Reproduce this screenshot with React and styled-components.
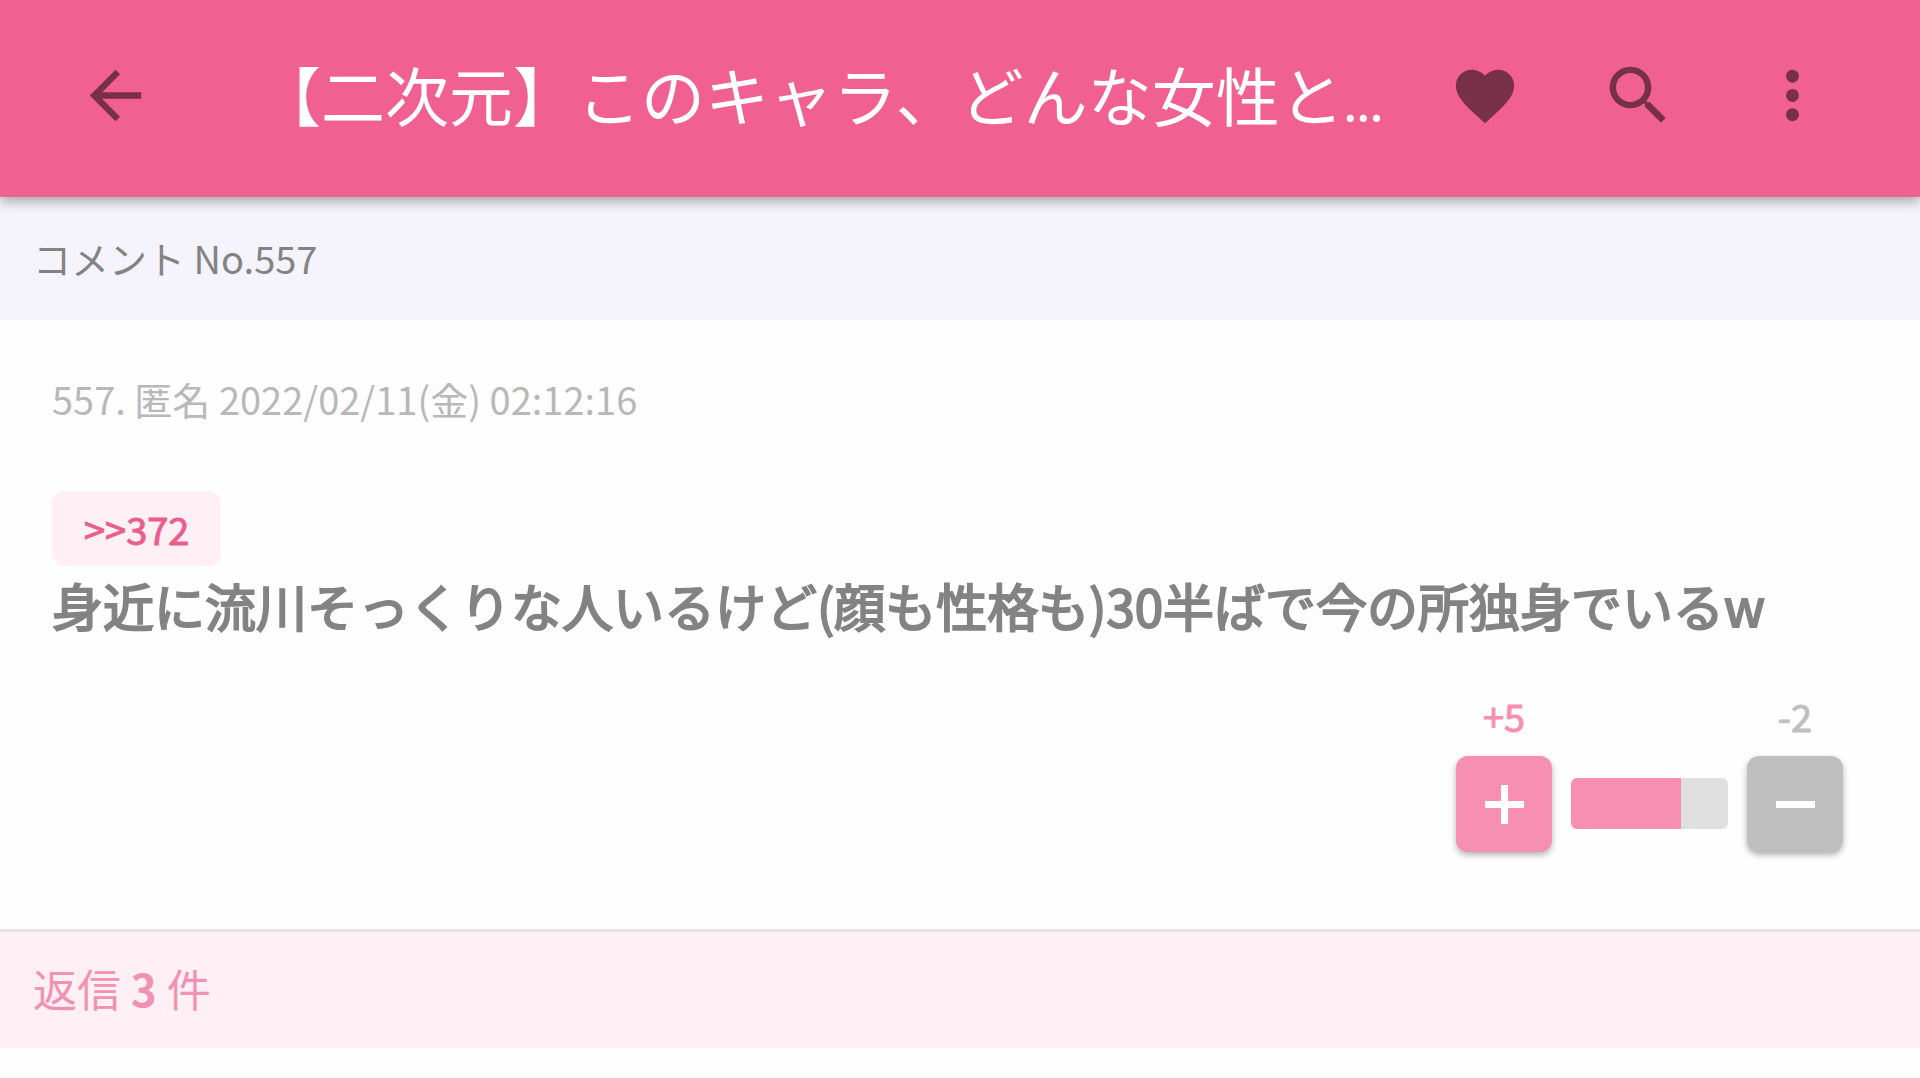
import React from "react";
import styled, { createGlobalStyle } from "styled-components";
import { MdArrowBack, MdFavorite, MdMoreVert, MdSearch } from "react-icons/md";

const post = {
  no: 557,
  name: "匿名",
  date: "2022/02/11(金) 02:12:16",
  replyTo: 372,
  body: "身近に流川そっくりな人いるけど(顔も性格も)30半ばで今の所独身でいるw",
  plus: 5,
  minus: 2,
  replies: 3,
};

export default function App() {
  const share = Math.floor((post.plus / (post.plus + post.minus)) * 10) * 10;

  return (
    <>
      <GlobalStyle />
      <Header>
        <IconButton aria-label="戻る">
          <MdArrowBack size={77} />
        </IconButton>
        <Title>
          【二次元】このキャラ、どんな女性と<Dots>...</Dots>
        </Title>
        <Actions>
          <IconButton aria-label="お気に入り">
            <MdFavorite size={70} />
          </IconButton>
          <IconButton aria-label="検索">
            <MdSearch size={77} />
          </IconButton>
          <IconButton aria-label="メニュー">
            <MdMoreVert size={77} />
          </IconButton>
        </Actions>
      </Header>
      <main>
        <SectionTitle>コメント No.{post.no}</SectionTitle>
        <Post>
          <Meta>
            {post.no}. {post.name} {post.date}
          </Meta>
          <Anchor href={`#${post.replyTo}`}>&gt;&gt;{post.replyTo}</Anchor>
          <Body>{post.body}</Body>
          <Votes>
            <Vote color="#f78fb3">
              <Count>+{post.plus}</Count>
              <VoteButton aria-label="プラス">
                <svg width="39" height="39" viewBox="0 0 39 39" fill="#fff">
                  <path d="M16 0h7v16h16v7H23v16h-7V23H0v-7h16z" />
                </svg>
              </VoteButton>
            </Vote>
            <Gauge>
              <GaugeFill style={{ width: `${share}%` }} />
            </Gauge>
            <Vote color="#bfbfbf">
              <Count>-{post.minus}</Count>
              <VoteButton aria-label="マイナス">
                <svg width="39" height="39" viewBox="0 0 39 39" fill="#fff">
                  <path d="M0 16h39v7H0z" />
                </svg>
              </VoteButton>
            </Vote>
          </Votes>
        </Post>
        <Replies>
          返信 <b>{post.replies}</b> 件
        </Replies>
      </main>
    </>
  );
}

const GlobalStyle = createGlobalStyle`
  * {
    box-sizing: border-box;
  }

  body {
    margin: 0;
    background: #fefefe;
    color: #838383;
    font-family: "Noto Sans CJK JP", sans-serif;
    font-size: 38px;
    line-height: 56px;
  }

  button {
    padding: 0;
    border: 0;
    font: inherit;
    cursor: pointer;
  }
`;

const Header = styled.header`
  position: relative;
  display: flex;
  align-items: center;
  min-height: 197px;
  padding: 0 89px 6px 77px;
  background: #f06191;
  box-shadow: 0 4px 12px rgba(0, 0, 0, 0.35);
`;

const IconButton = styled.button`
  display: flex;
  align-items: center;
  justify-content: center;
  flex-shrink: 0;
  width: 77px;
  height: 77px;
  background: none;
  color: rgba(0, 0, 0, 0.5);
`;

const Title = styled.h1`
  flex: 1;
  min-width: 0;
  margin: 0 0 0 103px;
  padding-top: 4px;
  overflow: hidden;
  color: #fff;
  font-size: 64px;
  font-weight: 400;
  line-height: 96px;
  white-space: nowrap;
`;

const Dots = styled.span`
  font-size: 44px;
  font-weight: 500;
`;

const Actions = styled.div`
  display: flex;
  gap: 77px;
`;

const SectionTitle = styled.h2`
  margin: 0;
  padding: 33px 33px 34px;
  background: #f5f4fd;
  font-size: 38px;
  font-weight: 400;
`;

const Post = styled.article`
  padding: 51px 77px 77px 52px;
`;

const Meta = styled.div`
  margin-bottom: 64px;
  color: #b8b8b8;
`;

const Anchor = styled.a`
  display: block;
  width: fit-content;
  padding: 0 32px;
  border-radius: 12px;
  background: #fff0f5;
  color: #ea5e8d;
  line-height: 75px;
  text-decoration: none;
  -webkit-text-stroke: 1px currentColor;
`;

const Body = styled.p`
  margin: 0;
  font-size: 51px;
  line-height: 78px;
  -webkit-text-stroke: 2px currentColor;
`;

const Votes = styled.div`
  display: flex;
  align-items: flex-end;
  justify-content: flex-end;
  gap: 19px;
  margin-top: 44px;
`;

const Vote = styled.div`
  display: flex;
  flex-direction: column;
  align-items: center;
  gap: 12px;
  color: ${({ color }) => color};
`;

const Count = styled.span`
  -webkit-text-stroke: 1px currentColor;
`;

const VoteButton = styled.button`
  display: flex;
  align-items: center;
  justify-content: center;
  width: 96px;
  height: 96px;
  border-radius: 12px;
  background: currentColor;
  box-shadow: 0 3px 6px rgba(0, 0, 0, 0.3);
  color: inherit;
`;

const Gauge = styled.div`
  width: 157px;
  height: 51px;
  margin-bottom: 23px;
  overflow: hidden;
  border-radius: 6px;
  background: #e0e0e0;
`;

const GaugeFill = styled.div`
  height: 100%;
  background: #f78fb3;
`;

const Replies = styled.h2`
  margin: 0;
  padding: 0 33px 4px;
  border-top: 3px solid #e9e1e5;
  background: #fff0f5;
  color: #f292b3;
  font-size: 44px;
  font-weight: 400;
  line-height: 112px;
`;
